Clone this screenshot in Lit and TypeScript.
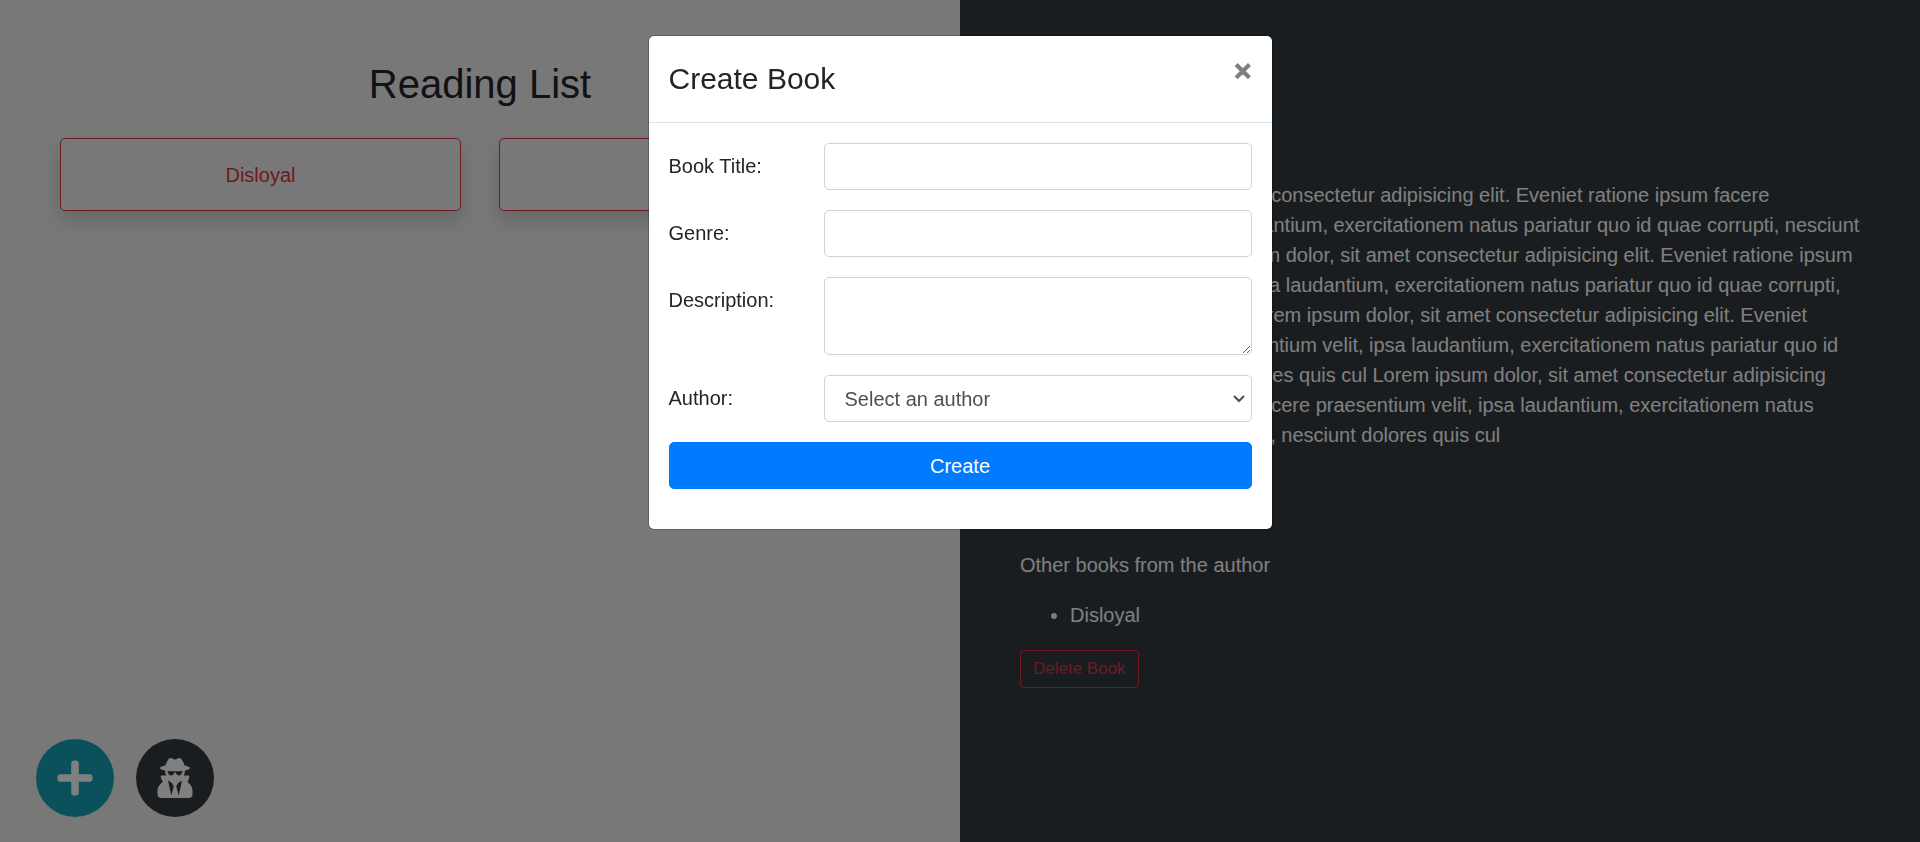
import { LitElement, html, css, svg } from "lit";
import { customElement, property, state } from "lit/decorators.js";

interface Book {
  id: string;
  name: string;
  genre: string;
  author: string;
}

const LOREM =
  "Lorem ipsum dolor, sit amet consectetur adipisicing elit. Eveniet ratione ipsum facere praesentium velit, ipsa laudantium, exercitationem natus pariatur quo id quae corrupti, nesciunt dolores quis cul";

const BOOKS: Book[] = [
  { id: "1", name: "Disloyal", genre: "Memoir", author: "Michael Cohen" },
  { id: "2", name: "Rage", genre: "Politics", author: "Bob Woodward" },
];

const plusIcon = svg`<path d="M416 208H272V64c0-17.67-14.33-32-32-32h-32c-17.67 0-32 14.33-32 32v144H32c-17.67 0-32 14.33-32 32v32c0 17.67 14.33 32 32 32h144v144c0 17.67 14.33 32 32 32h32c17.67 0 32-14.33 32-32V304h144c17.67 0 32-14.33 32-32v-32c0-17.67-14.33-32-32-32z"/>`;

const secretIcon = svg`<path d="M383.9 308.3l23.9-62.6c4-10.5-3.7-21.7-15-21.7h-58.5c11-18.9 17.8-40.6 17.8-64v-.3c39.2-7.8 64-19.1 64-31.7 0-13.3-27.3-25.1-70.1-33-9.2-32.8-27-65.8-40.6-82.8-9.5-11.9-25.9-15.6-39.5-8.8l-27.6 13.8c-9 4.5-19.6 4.5-28.6 0L182.1 3.4c-13.6-6.8-30-3.1-39.5 8.8-13.5 17-31.4 50-40.6 82.8-42.7 7.9-70 19.7-70 33 0 12.6 24.8 23.9 64 31.7v.3c0 23.4 6.8 45.1 17.8 64H56.3c-11.5 0-19.2 11.7-14.7 22.3l25.8 60.2C27.3 329.8 0 372.7 0 422.4v44.8C0 491.9 20.1 512 44.8 512h358.4c24.7 0 44.8-20.1 44.8-44.8v-44.8c0-48.4-25.8-90.4-64.1-114.1zM176 480l-41.6-192 49.6 32 24 40-32 120zm96 0l-32-120 24-40 49.6-32L272 480zm41.7-298.5c-3.9 11.9-7 24.6-16.5 33.4-10.1 9.3-48 22.4-64-25-2.8-8.4-15.4-8.4-18.3 0-17 50.2-56 32.4-64 25-9.5-8.8-12.7-21.5-16.5-33.4-.8-2.5-6.3-5.7-6.3-5.8v-10.8c28.3 3.6 61 5.8 96 5.8s67.7-2.1 96-5.8v10.8c-.1.1-5.6 3.2-6.4 5.8z"/>`;

const base = css`
  *,
  *::before,
  *::after {
    box-sizing: border-box;
  }
  h2,
  h4,
  p,
  ul {
    margin: 0;
  }
  button,
  input,
  select,
  textarea {
    margin: 0;
    font: inherit;
  }
  button {
    cursor: pointer;
  }
`;

@customElement("book-list")
export class BookList extends LitElement {
  static styles = [
    base,
    css`
      :host {
        display: flex;
        flex-direction: column;
        justify-content: space-between;
        background: #f0f0f0;
      }
      .list {
        padding: 60px 60px 20px;
      }
      .heading {
        margin-bottom: 30px;
        font-size: 40px;
        font-weight: 400;
        line-height: 48px;
        text-align: center;
      }
      .cards {
        display: grid;
        grid-template-columns: repeat(2, minmax(0, 1fr));
        gap: 38px;
      }
      .card {
        min-height: 73px;
        padding: 20px;
        border: 1px solid #dc3545;
        border-radius: 5px;
        background: transparent;
        box-shadow: 0 10px 20px rgba(0, 0, 0, 0.15);
        color: #dc3545;
        line-height: 30px;
      }
      .actions {
        display: flex;
        gap: 22px;
        padding: 25px 36px;
      }
      .round {
        display: grid;
        place-items: center;
        width: 78px;
        height: 78px;
        padding: 0;
        border: 0;
        border-radius: 50%;
        color: #fff;
      }
      .info {
        background: #17a2b8;
      }
      .dark {
        background: #343a40;
      }
      .icon {
        display: block;
        width: 36px;
        height: 40px;
        fill: currentColor;
      }
    `,
  ];

  @property({ attribute: false }) books: Book[] = [];

  render() {
    return html`
      <section class="list">
        <h2 class="heading">Reading List</h2>
        <div class="cards">
          ${this.books.map(
            (b) => html`<button class="card" type="button">${b.name}</button>`
          )}
        </div>
      </section>
      <div class="actions">
        <button
          class="round info"
          type="button"
          aria-label="Add book"
          @click=${() => this.dispatchEvent(new CustomEvent("add-book"))}
        >
          <svg class="icon" viewBox="0 0 448 512" aria-hidden="true">${plusIcon}</svg>
        </button>
        <button class="round dark" type="button" aria-label="Add author">
          <svg class="icon" viewBox="0 0 448 512" aria-hidden="true">${secretIcon}</svg>
        </button>
      </div>
    `;
  }
}

@customElement("book-details")
export class BookDetails extends LitElement {
  static styles = [
    base,
    css`
      :host {
        display: block;
        padding: 60px;
        background: #343a40;
        color: #fff;
      }
      .title {
        margin-bottom: 12px;
        font-size: 40px;
        font-weight: 400;
        line-height: 48px;
      }
      .genre {
        margin-bottom: 30px;
      }
      .author {
        margin: 20px 0 50px;
      }
      .others {
        margin: 20px 0;
        padding-left: 50px;
      }
      .delete {
        padding: 5px 12px;
        border: 1px solid #dc3545;
        border-radius: 4px;
        background: transparent;
        color: #dc3545;
        font-size: 17px;
        line-height: 26px;
      }
    `,
  ];

  @property({ attribute: false }) book!: Book;

  render() {
    const description = Array(4).fill(LOREM).join(" ");
    return html`
      <h2 class="title">${this.book.name}</h2>
      <p class="genre">${this.book.genre}</p>
      <p>${description}</p>
      <p class="author">${this.book.author}</p>
      <p>Other books from the author</p>
      <ul class="others">
        <li>${this.book.name}</li>
      </ul>
      <button class="delete" type="button">Delete Book</button>
    `;
  }
}

@customElement("create-book-dialog")
export class CreateBookDialog extends LitElement {
  static styles = [
    base,
    css`
      :host {
        position: fixed;
        inset: 0;
        overflow: auto;
        padding: 35px 10px;
        background: rgba(0, 0, 0, 0.5);
      }
      .modal {
        max-width: 625px;
        margin: 0 auto;
        border: 1px solid rgba(0, 0, 0, 0.2);
        border-radius: 6px;
        background: #fff;
        background-clip: padding-box;
      }
      .header {
        display: flex;
        align-items: flex-start;
        justify-content: space-between;
        padding-left: 20px;
        border-bottom: 1px solid #dee2e6;
      }
      .title {
        padding: 20px 0;
        font-size: 30px;
        font-weight: 400;
        line-height: 46px;
      }
      .close {
        padding: 20px;
        border: 0;
        background: transparent;
        color: #000;
        font-size: 30px;
        font-weight: 700;
        line-height: 30px;
        opacity: 0.5;
        -webkit-text-stroke: 1px #000;
      }
      .body {
        display: grid;
        gap: 20px;
        padding: 20px 20px 40px;
      }
      .row {
        display: grid;
        grid-template-columns: 155px minmax(0, 1fr);
        align-items: start;
      }
      .label {
        padding: 8px 0;
      }
      .control {
        display: block;
        width: 100%;
        height: 47px;
        padding: 7px 15px;
        border: 1px solid #ced4da;
        border-radius: 5px;
        background: #fff;
        color: #495057;
        line-height: 30px;
      }
      .area {
        height: 78px;
        resize: vertical;
      }
      .picker {
        display: grid;
        align-items: center;
      }
      .select {
        grid-area: 1 / 1;
        padding: 7px 20px;
        appearance: none;
      }
      .arrow {
        grid-area: 1 / 1;
        justify-self: end;
        width: 12px;
        height: 8px;
        margin-right: 7px;
        fill: none;
        stroke: #495057;
        stroke-width: 2;
        pointer-events: none;
      }
      .submit {
        height: 47px;
        padding: 7px 15px;
        border: 1px solid #007bff;
        border-radius: 5px;
        background: #007bff;
        color: #fff;
        line-height: 30px;
      }
    `,
  ];

  private close() {
    this.dispatchEvent(new CustomEvent("close"));
  }

  render() {
    return html`
      <div class="modal" role="dialog" aria-modal="true" aria-labelledby="heading">
        <div class="header">
          <h4 class="title" id="heading">Create Book</h4>
          <button class="close" type="button" aria-label="Close" @click=${this.close}>×</button>
        </div>
        <form class="body" @submit=${(e: Event) => e.preventDefault()}>
          <div class="row">
            <label class="label" for="name">Book Title:</label>
            <input class="control" id="name" type="text" />
          </div>
          <div class="row">
            <label class="label" for="genre">Genre:</label>
            <input class="control" id="genre" type="text" />
          </div>
          <div class="row">
            <label class="label" for="description">Description:</label>
            <textarea class="control area" id="description"></textarea>
          </div>
          <div class="row">
            <label class="label" for="author">Author:</label>
            <div class="picker">
              <select class="control select" id="author">
                <option>Select an author</option>
                ${BOOKS.map((b) => html`<option>${b.author}</option>`)}
              </select>
              <svg class="arrow" viewBox="0 0 12 8" aria-hidden="true">
                <path d="M1 1l5 5 5-5" />
              </svg>
            </div>
          </div>
          <button class="submit" type="submit">Create</button>
        </form>
      </div>
    `;
  }
}

@customElement("app-root")
export class AppRoot extends LitElement {
  static styles = css`
    :host {
      display: grid;
      grid-template-columns: repeat(2, minmax(0, 1fr));
      min-height: 100vh;
      color: #212529;
      font-family: "Liberation Sans", Arial, sans-serif;
      font-size: 20px;
      line-height: 30px;
    }
  `;

  @state() private creating = true;

  render() {
    return html`
      <book-list .books=${BOOKS} @add-book=${() => (this.creating = true)}></book-list>
      <book-details .book=${BOOKS[0]}></book-details>
      ${this.creating
        ? html`<create-book-dialog @close=${() => (this.creating = false)}></create-book-dialog>`
        : null}
    `;
  }
}
